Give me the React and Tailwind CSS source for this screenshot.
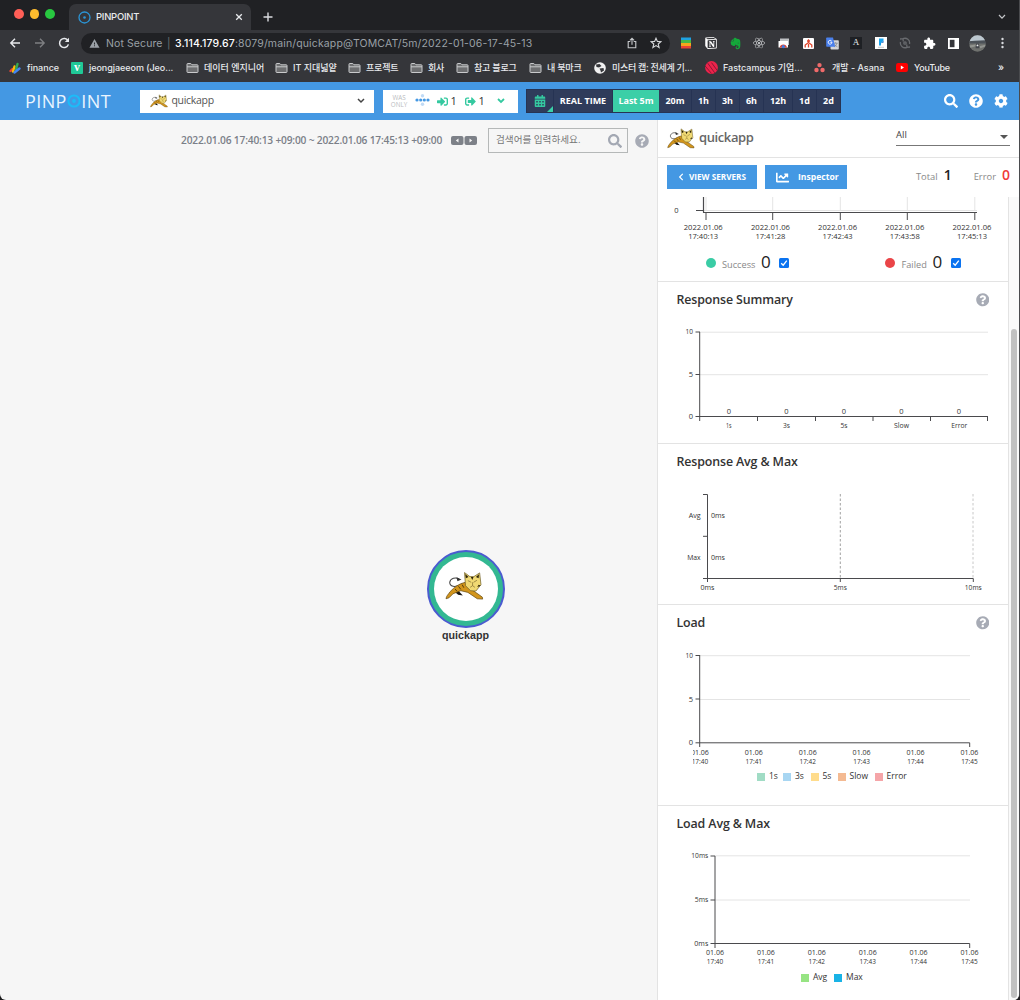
import React from "react";
import {
  FaSignInAlt, FaSignOutAlt, FaCalendarAlt, FaSearch, FaQuestionCircle, FaCog,
  FaChartLine, FaChevronLeft, FaEvernote, FaReact, FaPuzzlePiece,
} from "react-icons/fa";
import { SiNotion } from "react-icons/si";
import { MdWarning } from "react-icons/md";

const ui = "font-[Inter,'Noto_Sans_CJK_KR',sans-serif]";
const AXIS = "#4a4a4d";
const GRID = "#e4e4e4";

function Cat({ className }) {
  return (
    <svg viewBox="90 92 116 86" className={className}>
      <path d="M142 128C118 142 104 136 104 124C106 111 122 108 132 114" fill="none" stroke="#444" strokeWidth="3" />
      <path d="M124 109L139 116L127 121Z" fill="#333" />
      <path d="M116 150L130 149L143 163L129 161Z" fill="#151515" />
      <path d="M93 173C94 164 100 160 105 152C118 138 132 128 150 124L170 146L201 168L202 174L186 173L158 154L137 149L114 158L102 170Z" fill="#d2951c" stroke="#5e4510" strokeWidth="2" />
      <path d="M148 95L164 107H176L193 96L197 131L182 150L166 149L151 134Z" fill="#f0d973" stroke="#665520" strokeWidth="2" />
      <path d="M150 99L160 108L152 112ZM191 100L182 108L190 112ZM167 108H175L171 117ZM197 134L190 131L186 138Z" fill="#2b2208" />
      <path d="M158 119L168 124M185 118L175 124M165 139L172 134L179 139M172 124V134" fill="none" stroke="#7b672c" strokeWidth="2" />
      <path d="M120 144L126 151M130 136L137 145M141 131L146 140" fill="none" stroke="#3b2d0c" strokeWidth="2.5" />
    </svg>
  );
}

function Folder() {
  return (
    <svg viewBox="0 0 13 12" className="h-3 w-[13px] shrink-0">
      <path d="M1 2.2Q1 1.5 1.7 1.5H4.8L6 2.8H11.3Q12 2.8 12 3.5V9.8Q12 10.5 11.3 10.5H1.7Q1 10.5 1 9.8Z" fill="#6d6e70" stroke="#c9cacc" />
      <path d="M1 4.8H12" stroke="#c9cacc" />
    </svg>
  );
}

function Bookmark({ icon, label, className }) {
  return (
    <div className={"flex shrink-0 items-center whitespace-nowrap " + className}>
      <span className="flex w-[18px] shrink-0 items-center">{icon}</span>
      <span>{label}</span>
    </div>
  );
}

function Chrome() {
  return (
    <div className={"bg-[#35363a] text-[#e8eaed] " + ui}>
      <div className="flex h-[30px] items-end bg-[#202124]">
        <div className="flex h-full w-[69px] items-center gap-[6px] pl-[14px] pb-[2px]">
          <i className="size-[9.5px] rounded-full bg-[#ff5f57]" />
          <i className="size-[9.5px] rounded-full bg-[#febc2e]" />
          <i className="size-[9.5px] rounded-full bg-[#28c840]" />
        </div>
        <div className="flex h-[26px] w-[182px] items-center rounded-t-[7px] bg-[#35363a] pl-[9px] text-[9.5px] font-medium tracking-[-0.25px]">
          <svg viewBox="0 0 13 13" className="size-[13px]">
            <circle cx="6.5" cy="6.5" r="5.5" fill="none" stroke="#2b95d6" strokeWidth="1.3" />
            <circle cx="6.5" cy="6.5" r="1.3" fill="#2b95d6" />
          </svg>
          <span className="ml-[5px] grow">PINPOINT</span>
          <svg viewBox="0 0 8 8" className="mr-[8px] size-[8px]"><path d="M1.2 1.2L6.8 6.8M6.8 1.2L1.2 6.8" stroke="#e8eaed" strokeWidth="1.3" /></svg>
        </div>
        <svg viewBox="0 0 10 10" className="mb-[8px] ml-[12px] size-[10px]"><path d="M5 .5V9.5M.5 5H9.5" stroke="#dadce0" strokeWidth="1.4" /></svg>
        <svg viewBox="0 0 8 6" className="mb-[10px] mr-[14px] ml-auto h-[6px] w-[8px]"><path d="M1 1L4 4.2L7 1" fill="none" stroke="#c5c7ca" strokeWidth="1.2" /></svg>
      </div>

      <div className="flex h-[26px] items-center">
        <svg viewBox="0 0 12 12" className="ml-[9px] size-[12px]"><path d="M11 6H2M6 1.8L1.8 6L6 10.2" fill="none" stroke="#e8eaed" strokeWidth="1.4" /></svg>
        <svg viewBox="0 0 12 12" className="ml-[13px] size-[12px]"><path d="M1 6H10M6 1.8L10.2 6L6 10.2" fill="none" stroke="#7f8083" strokeWidth="1.3" /></svg>
        <svg viewBox="0 0 12 12" className="ml-[12px] size-[12px]"><path d="M10 3.8A4.5 4.5 0 1 0 10.4 7.4" fill="none" stroke="#e8eaed" strokeWidth="1.5" /><path d="M11 .8V5H6.8Z" fill="#e8eaed" /></svg>
        <div className="ml-[11px] flex h-[21px] w-[589px] items-center whitespace-nowrap rounded-full bg-[#202124] text-[10.5px] text-[#9aa0a6]">
          <MdWarning className="ml-[8px] size-[11px]" />
          <span className="ml-[6px] w-[61px] pt-px tracking-[0.1px]">Not Secure</span>
          <span className="w-[8px] pt-px text-[#6b6f74]">|</span>
          <span className="grow pt-px tracking-[0.14px]"><span className="font-medium text-white">3.114.179.67</span>:8079/main/quickapp@TOMCAT/5m/2022-01-06-17-45-13</span>
          <svg viewBox="0 0 10 12" className="h-[12px] w-[10px]"><path d="M3.3 4.5H1.2V10.8H8.8V4.5H6.7M5 7.8V1.4M2.9 3.4L5 1.2L7.1 3.4" fill="none" stroke="#c7c9cc" strokeWidth="1.1" /></svg>
          <svg viewBox="0 0 12 12" className="mr-[8px] ml-[13px] size-[12px]"><path d="M6 1.2L7.4 4.4L10.9 4.7L8.2 7L9.1 10.5L6 8.6L2.9 10.5L3.8 7L1.1 4.7L4.6 4.4Z" fill="none" stroke="#d5d7da" strokeWidth="1.1" /></svg>
        </div>
        <div className="ml-[3px] flex items-center">
          <span className="flex w-[25px] justify-center">
            <svg viewBox="0 0 10 12" className="h-[12px] w-[10px]"><path d="M0 .5H10V3H0Z" fill="#1fa2e0" /><path d="M0 3H10V6H0Z" fill="#46b749" /><path d="M0 6H10V9H0Z" fill="#f5a51c" /><path d="M0 9H10V11.5H0Z" fill="#ea4335" /></svg>
          </span>
          <span className="flex w-[25px] justify-center"><SiNotion className="size-[12px] text-white" /></span>
          <span className="flex w-[24px] justify-center"><FaEvernote className="size-[13px] text-[#14a83a]" /></span>
          <span className="flex w-[24px] justify-center"><FaReact className="size-[12px] text-[#d0d2d4]" /></span>
          <span className="flex w-[25px] justify-center">
            <svg viewBox="0 0 12 12" className="size-[12px]"><path d="M2 1.5H11V8H2Z" fill="#bfc1c4" /><path d="M.5 4H10V10.5H.5Z" fill="#fff" /><path d="M1.6 10.5A3.8 3.8 0 0 1 9 10.5Z" fill="#e04434" /><circle cx="5.3" cy="9.6" r="1.6" fill="#3c7de6" /></svg>
          </span>
          <span className="flex w-[24px] justify-center">
            <svg viewBox="0 0 11 11" className="size-[11px]"><rect width="11" height="11" rx="1" fill="#fff" /><path d="M5.5 1.2V4M2.2 9.5V7L5.5 4.5L8.8 7V9.5M5.5 6V9.5M4 3H7" fill="none" stroke="#e0452c" strokeWidth="1.3" /></svg>
          </span>
          <span className="flex w-[24px] justify-center">
            <svg viewBox="0 0 13 13" className="size-[13px]">
              <rect x="4.5" y="3.2" width="8.3" height="9.3" rx=".8" fill="#d4d6d9" />
              <path d="M7.5 6.2H11.7M9.6 5.2V6.2M11 6.2Q10.4 8.6 8 10M8.6 7.4Q9.6 9 11.4 9.8" fill="none" stroke="#7a8086" strokeWidth=".7" />
              <path d="M.9.5H7L9.2 9.8H.9Q.2 9.8.2 9V1.2Q.2.5.9.5Z" fill="#4a80ec" />
              <path d="M5.6 4.1A1.9 1.9 0 1 0 6 5.3H4.3" fill="none" stroke="#fff" strokeWidth=".9" />
            </svg>
          </span>
          <span className="flex w-[24px] justify-center"><span className="flex size-[12px] items-center justify-center bg-[#1e2024] font-['Liberation_Serif',serif] text-[9px]">A</span></span>
          <span className="flex w-[25px] justify-center">
            <svg viewBox="0 0 12 12" className="size-[12px]"><rect width="12" height="12" fill="#fff" /><path d="M4 1.5H8.5V3.5L6 6.3V8.5H4Z" fill="#1ba6f0" /><path d="M8.5 3.5V5.8H6L4.5 8Z" fill="#1664c4" /><path d="M3 10.3H9" stroke="#c9c9c9" /></svg>
          </span>
          <span className="flex w-[24px] justify-center">
            <svg viewBox="0 0 12 12" className="size-[12px]" fill="none" stroke="#696b6f" strokeWidth="1.3"><circle cx="6" cy="6" r="1.2" /><path d="M4 1.7A4.7 4.7 0 0 1 10.5 7M8 10.3A4.7 4.7 0 0 1 1.5 5M1 2L4 1.7L4.3 4.5M11 10L8 10.3L7.7 7.5" /></svg>
          </span>
          <span className="flex w-[24px] justify-center">
            <svg viewBox="0 0 24 24" className="size-[13px]" fill="#fff"><path d="M20.5 11H19V7c0-1.1-.9-2-2-2h-4V3.500C13 2.120 11.880 1 10.500 1S8 2.120 8 3.500V5H4c-1.100 0-2 .9-2 2v3.800h1.500c1.500 0 2.700 1.200 2.700 2.700s-1.200 2.700-2.700 2.700H2V20c0 1.100.9 2 2 2h3.800v-1.500c0-1.500 1.200-2.700 2.700-2.700s2.700 1.200 2.700 2.700V22H17c1.100 0 2-.9 2-2v-4h1.500c1.380 0 2.500-1.120 2.500-2.500S21.880 11 20.500 11z" /></svg>
          </span>
          <span className="flex w-[24px] justify-center">
            <svg viewBox="0 0 11 11" className="size-[11px]"><path d="M0 0H11V11H0Z" fill="#fff" /><path d="M1.800 1.800H6.500V9.200H1.800Z" fill="#35363a" /></svg>
          </span>
          <span className="flex w-[25px] justify-center">
            <svg viewBox="0 0 18 18" className="size-[17px]">
              <clipPath id="avatar"><circle cx="9" cy="9" r="8.7" /></clipPath>
              <g clipPath="url(#avatar)"><path d="M0 0H18V18H0Z" fill="#6f716e" /><path d="M0 0H18V6L0 7Z" fill="#bcc7cf" /><path d="M0 6.500L6 6L18 5.500V9H0Z" fill="#4c5258" /><path d="M0 11L7 10V12L0 14ZM11 12L18 10V12L12 14Z" fill="#92948f" /><path d="M7.500 9H10.500L11 14H7Z" fill="#42454a" /><circle cx="9" cy="11" r="1" fill="#eee" /></g>
            </svg>
          </span>
          <span className="flex w-[24px] justify-center">
            <svg viewBox="0 0 3 12" className="h-[12px] w-[3px]" fill="#dadce0"><circle cx="1.5" cy="2" r="1.2" /><circle cx="1.5" cy="6" r="1.2" /><circle cx="1.5" cy="10" r="1.2" /></svg>
          </span>
        </div>
      </div>

      <div className="flex h-[26px] items-center pb-[3px] pl-[9px] text-[9px] font-medium">
        <Bookmark className="w-[62px]" label="finance" icon={<svg viewBox="0 0 12 12" className="size-[12px]" fill="none" strokeWidth="2.4" strokeLinecap="round"><path d="M1.5 9L3.5 7" stroke="#ea4335" /><path d="M4 9.500L5.500 4.500" stroke="#fbbc04" /><path d="M7 7.500L8.500 2" stroke="#34a853" /><path d="M5.500 10.500L10.500 6.500" stroke="#4285f4" /></svg>} />
        <Bookmark className="w-[115px] tracking-[-0.05px]" label="jeongjaeeom (Jeo..." icon={<span className="flex size-[12px] items-center justify-center rounded-[1px] bg-[#20c997] pb-[2px] font-['Liberation_Serif',serif] text-[12px] leading-none font-bold text-white">v</span>} />
        <Bookmark className="w-[89px]" label="데이터 엔지니어" icon={<Folder />} />
        <Bookmark className="w-[73px]" label="IT 지대넓얕" icon={<Folder />} />
        <Bookmark className="w-[62px] tracking-[-0.2px]" label="프로젝트" icon={<Folder />} />
        <Bookmark className="w-[46px] tracking-[-0.2px]" label="회사" icon={<Folder />} />
        <Bookmark className="w-[73px] tracking-[-0.2px]" label="참고 블로그" icon={<Folder />} />
        <Bookmark className="w-[65px] tracking-[-0.2px]" label="내 북마크" icon={<Folder />} />
        <Bookmark className="w-[111px] tracking-[-0.3px]" label="미스터 캡: 전세계 기..." icon={<svg viewBox="0 0 12 12" className="size-[12px]"><circle cx="6" cy="6" r="5.8" fill="#f1f1f1" /><path d="M2 2.500L5.500 2L7.500 4L5 5.500L2.500 5ZM5.500 6.500L9.500 6L10 8.500L7 10.500L6.500 8.500Z" fill="#35363a" /></svg>} />
        <Bookmark className="w-[109px]" label="Fastcampus 기업..." icon={<svg viewBox="0 0 12 12" className="size-[13px]"><circle cx="6" cy="6" r="5.9" fill="#ed234b" /><path d="M2.500 2L9 11M0 4.500L6 11.500M6 1.500L11.500 9" stroke="#7c1530" strokeWidth=".8" /></svg>} />
        <Bookmark className="w-[82px]" label="개발 - Asana" icon={<svg viewBox="0 0 12 12" className="size-[11px]" fill="#f06a6a"><circle cx="6" cy="3.4" r="2.4" /><circle cx="2.7" cy="8.8" r="2.4" /><circle cx="9.3" cy="8.8" r="2.4" /></svg>} />
        <Bookmark className="w-[102px] tracking-[-0.2px]" label="YouTube" icon={<svg viewBox="0 0 12 9" className="h-[9px] w-[12px]"><rect width="12" height="9" rx="2.2" fill="#f00" /><path d="M4.800 2.500L8 4.500L4.800 6.500Z" fill="#fff" /></svg>} />
        <span className="text-[10px]">»</span>
      </div>
    </div>
  );
}

function Period({ className, children }) {
  return <div className={"flex h-full items-center justify-center border-r border-[#263353] " + className}>{children}</div>;
}

function Header() {
  return (
    <header className="flex h-[38px] items-center bg-[#4498e3] font-['Open_Sans',sans-serif]">
      <div className="ml-[25px] flex w-[114.5px] items-center text-[18px] leading-none text-[#eaf5ff]">
        <span className="tracking-[0.4px]">PINP</span>
        <svg viewBox="0 0 14 14" className="mr-[0.5px] size-[14px]"><circle cx="7" cy="7" r="5.6" fill="none" stroke="#1cbcf8" strokeWidth="2" /><circle cx="7" cy="7" r="1.9" fill="#1cbcf8" /></svg>
        <span className="tracking-[0.4px]">INT</span>
      </div>
      <div className="flex h-[23px] w-[234px] items-center bg-white pl-[10px] text-[10.5px] text-[#555]">
        <Cat className="h-[14px] w-[18px]" />
        <span className="ml-[4px] grow tracking-[-0.3px]">quickapp</span>
        <svg viewBox="0 0 8 6" className="mr-[9px] h-[6px] w-[8px]"><path d="M1 1L4 4L7 1" fill="none" stroke="#444" strokeWidth="1.5" /></svg>
      </div>
      <div className="ml-[9px] flex h-[23px] w-[135px] items-center bg-white text-[11px] text-[#333]">
        <span className="ml-[8px] w-[17px] text-center text-[6.3px] leading-[7px] text-[#b9bbc0]">WAS ONLY</span>
        <svg viewBox="0 0 15 12" className="mb-[3px] ml-[7px] h-[12px] w-[15px]"><g fill="#4498e3"><circle cx="2" cy="6" r="1.600" /><circle cx="5.700" cy="6" r="1.600" /><circle cx="9.300" cy="6" r="1.600" /><circle cx="13" cy="6" r="1.600" /></g><g fill="#bfdaf6"><circle cx="7.500" cy="1.800" r="1.700" /><circle cx="7.500" cy="10.200" r="1.700" /></g></svg>
        <FaSignInAlt className="ml-[7px] size-[11px] text-[#34c9a0]" />
        <span className="ml-[3px] w-[12px]">1</span>
        <FaSignOutAlt className="ml-[2px] size-[11px] text-[#34c9a0]" />
        <span className="ml-[3px] w-[12px]">1</span>
        <svg viewBox="0 0 8 6" className="ml-[6px] h-[6px] w-[8px]"><path d="M1 1L4 4L7 1" fill="none" stroke="#34c9a0" strokeWidth="1.800" /></svg>
      </div>
      <div className="ml-[8.5px] flex h-[24px] w-[315px] items-center border-y border-[#263353] bg-[#2f3c5b] text-[9px] font-bold whitespace-nowrap text-white">
        <div className="relative flex h-full w-[28px] shrink-0 items-center justify-center border-x border-[#263353]">
          <FaCalendarAlt className="size-[12px] text-[#34c9a0]" />
          <svg viewBox="0 0 6 6" className="absolute right-0 bottom-0 size-[6px]"><path d="M6 0V6H0Z" fill="#3bd0a8" /></svg>
        </div>
        <Period className="w-[59px]">REAL TIME</Period>
        <div className="flex h-full w-[46px] items-center justify-center bg-[#3bcfa7]">Last 5m</div>
        <Period className="w-[33px]">20m</Period>
        <Period className="w-[24px]">1h</Period>
        <Period className="w-[24px]">3h</Period>
        <Period className="w-[24px]">6h</Period>
        <Period className="w-[29px]">12h</Period>
        <Period className="w-[24px]">1d</Period>
        <Period className="w-[24px]">2d</Period>
      </div>
      <div className="mr-[12px] ml-auto flex items-center gap-[11px] text-white">
        <FaSearch className="size-[14px]" />
        <FaQuestionCircle className="size-[14px]" />
        <FaCog className="size-[14px]" />
      </div>
    </header>
  );
}

function ServerMap() {
  return (
    <main className="flex w-[657px] flex-col bg-[#f6f6f6]">
      <div className="flex h-[41px] items-center justify-end pr-[8px] font-['Open_Sans','Noto_Sans_CJK_KR',sans-serif] text-[#7b7f88]">
        <span className="w-[262px] whitespace-nowrap text-[10.2px] font-semibold tracking-[-0.18px]">2022.01.06 17:40:13 +09:00 ~ 2022.01.06 17:45:13 +09:00</span>
        <svg viewBox="0 0 26 9" className="ml-[8px] h-[9px] w-[26px]"><rect width="12.5" height="9" rx="2" fill="#7d8188" /><rect x="13.5" width="12.5" height="9" rx="2" fill="#7d8188" /><path d="M7.500 2.500V6.500L4.800 4.500ZM18.500 2.500V6.500L21.200 4.500Z" fill="#f6f6f6" /></svg>
        <div className="ml-[11px] flex h-[25px] w-[140px] items-center border border-[#b5b8b8] pl-[7px] text-[9.6px] text-[#777]">
          <span className="grow">검색어를 입력하세요.</span>
          <FaSearch className="mr-[5px] size-[14px] text-[#a3a8b3]" />
        </div>
        <FaQuestionCircle className="ml-[7px] size-[14px] text-[#a7abb5]" />
      </div>
      <div className="mt-[389px] ml-[426px] flex w-[79px] flex-col items-center">
        <div className="flex size-[78px] items-center justify-center rounded-full border-2 border-[#4b5bd0] bg-[#33b892]">
          <div className="flex size-[64px] items-center justify-center rounded-full bg-white">
            <Cat className="mt-[-6px] mr-[3px] h-[30px] w-[39px]" />
          </div>
        </div>
        <span className="font-['Liberation_Sans',sans-serif] text-[10.7px] leading-[14px] font-bold text-[#333]">quickapp</span>
      </div>
    </main>
  );
}

function T({ x, y, w, size = 7.5, anchor = "middle", fill = "#333", children }) {
  return (
    <text x={x} y={y} textAnchor={anchor} fontSize={size} fill={fill} textLength={w} lengthAdjust="spacingAndGlyphs">{children}</text>
  );
}

function Section({ title, help, className, children }) {
  return (
    <section className={"flex shrink-0 flex-col border-t border-[#e3e3e3] " + className}>
      <div className="flex h-[36px] shrink-0 items-center justify-between pr-[19px] pl-[18.5px]">
        <h2 className="text-[12.4px] font-semibold tracking-[-0.12px] text-[#333]">{title}</h2>
        {help && <FaQuestionCircle className="size-[13.5px] text-[#a7abb5]" />}
      </div>
      {children}
    </section>
  );
}

const chart = "w-[350px] shrink-0 font-['Open_Sans',sans-serif]";

function Scatter() {
  const xs = [706, 772.7, 840.3, 907.3, 974.8];
  const times = ["17:40:13", "17:41:28", "17:42:43", "17:43:58", "17:45:13"];
  return (
    <svg viewBox="658 197 350 50" className={chart + " h-[50px]"}>
      {xs.map((x, i) => (
        <g key={x}>
          <path d={`M${x} 197V211`} stroke={GRID} />
          <path d={`M${x} 213V220`} stroke={AXIS} />
          <T x={703.2 + i * 67.2} y={230} w={39}>2022.01.06</T>
          <T x={703.2 + i * 67.2} y={239.3} w={30}>{times[i]}</T>
        </g>
      ))}
      <path d="M704 210.5H977" stroke={GRID} />
      <path d="M703.5 197V212.5M696 210.5H703.5M703 212.5H977" stroke={AXIS} fill="none" strokeWidth="1.2" />
      <T x={676.5} y={212.7}>0</T>
    </svg>
  );
}

function ResponseSummary() {
  return (
    <svg viewBox="658 318 350 124" className={chart + " h-[124px]"}>
      <path d="M700 332.200H988M700 374.700H988" stroke={GRID} />
      <path d="M695.500 332H700M695.500 374.500H700M695.500 416.500H988M699.700 332V421" stroke={AXIS} fill="none" />
      {[757.5, 815.5, 873, 930.5, 987.5].map((x) => <path key={x} d={`M${x} 416V421`} stroke={AXIS} />)}
      <T x={693} y={334.3} w={7.5} anchor="end">10</T>
      <T x={693} y={377} anchor="end">5</T>
      <T x={693} y={418.5} anchor="end">0</T>
      {["1s", "3s", "5s", "Slow", "Error"].map((l, i) => (
        <g key={l}>
          <T x={728.8 + i * 57.5} y={414}>0</T>
          <T x={728.8 + i * 57.6} y={428.3} w={[5.5, 7, 7, 15, 16][i]} size={7.3}>{l}</T>
        </g>
      ))}
    </svg>
  );
}

function ResponseAvgMax() {
  return (
    <svg viewBox="658 480 350 124" className={chart + " h-[124px]"}>
      <path d="M840.300 494V578" stroke="#a0a0a0" strokeDasharray="2.5 2" />
      <path d="M973 494V578" stroke="#c8c8c8" strokeDasharray="2.5 2" />
      <path d="M703 494.500H707.500V582M703 536.300H707.500M703 578.500H973.300V582M840.300 578V582" stroke={AXIS} fill="none" />
      <T x={700.7} y={518} w={12} anchor="end">Avg</T>
      <T x={700.7} y={559.6} w={13.5} anchor="end">Max</T>
      <T x={711} y={518} w={14} anchor="start">0ms</T>
      <T x={711} y={559.6} w={14} anchor="start">0ms</T>
      <T x={707.5} y={590} w={14}>0ms</T>
      <T x={840.3} y={590} w={13}>5ms</T>
      <T x={973.3} y={590} w={17}>10ms</T>
    </svg>
  );
}

function Load() {
  return (
    <svg viewBox="658 641 350 125" className={chart + " h-[125px]"}>
      <path d="M700 655.700H970M700 699.500H970" stroke={GRID} />
      <path d="M695.500 655.500H700M695.500 699H700M695.500 742.800H969.700V747M699.700 655V747" stroke={AXIS} fill="none" />
      <T x={693} y={658.2} w={7.5} anchor="end">10</T>
      <T x={693} y={702} anchor="end">5</T>
      <T x={693} y={745} anchor="end">0</T>
      {[40, 41, 42, 43, 44, 45].map((m, i) => (
        <g key={m}>
          <T x={699.9 + i * 53.9} y={755} w={18}>01.06</T>
          <T x={699.9 + i * 53.9} y={764} w={16.5}>{"17:" + m}</T>
        </g>
      ))}
      <path d="M688 748H693V765H688Z" fill="#fff" />
    </svg>
  );
}

function LoadAvgMax() {
  return (
    <svg viewBox="658 842 350 125" className={chart + " h-[125px]"}>
      <path d="M715 855.800H970M715 900H970" stroke={GRID} />
      <path d="M710.500 856H715M710.500 900H715M710.500 943.500H969.700V948M715 856V948" stroke={AXIS} fill="none" />
      <T x={708.3} y={858.2} w={17} anchor="end">10ms</T>
      <T x={708.3} y={902} w={13.5} anchor="end">5ms</T>
      <T x={708.3} y={945.5} w={14} anchor="end">0ms</T>
      {[40, 41, 42, 43, 44, 45].map((m, i) => (
        <g key={m}>
          <T x={715 + i * 50.9} y={955.3} w={18}>01.06</T>
          <T x={715 + i * 50.9} y={964.3} w={16.5}>{"17:" + m}</T>
        </g>
      ))}
    </svg>
  );
}

function Legend({ color, className, label }) {
  return (
    <div className={"flex items-center whitespace-nowrap " + className}>
      <i className={"mr-[4px] size-[8px] shrink-0 " + color} />{label}
    </div>
  );
}

function Check() {
  return (
    <span className="flex size-[10px] items-center justify-center rounded-[1.5px] bg-[#0b73f0]">
      <svg viewBox="0 0 8 8" className="size-[8px]"><path d="M1.200 4.200L3.200 6.200L6.800 1.600" fill="none" stroke="#fff" strokeWidth="1.3" /></svg>
    </span>
  );
}

function Panel() {
  return (
    <aside className="flex w-[363px] flex-col border-l border-[#e3e3e3] bg-white font-['Open_Sans',sans-serif]">
      <div className="flex h-[38px] shrink-0 items-center border-b border-[#e3e3e3]">
        <Cat className="ml-[9px] h-[21px] w-[28px]" />
        <span className="ml-[4px] grow pb-px text-[13px] font-semibold tracking-[-0.4px] text-[#666]">quickapp</span>
        <div className="mr-[10px] mb-[5px] flex h-[20px] w-[114px] items-center justify-between border-b border-[#777] text-[9.5px] text-[#444]">
          <span className="pb-px">All</span>
          <svg viewBox="0 0 8 4" className="mt-[3px] mr-[2px] h-[4px] w-[8px]"><path d="M0 0H8L4 4Z" fill="#555" /></svg>
        </div>
      </div>
      <div className="flex h-[39px] shrink-0 items-center pb-px pl-[9px]">
        <div className="flex h-[24px] w-[90px] items-center bg-[#4498e3] text-[8.2px] font-bold whitespace-nowrap text-white">
          <FaChevronLeft className="ml-[10px] size-[8px]" /><span className="ml-[4px]">VIEW SERVERS</span>
        </div>
        <div className="ml-[8px] flex h-[24px] w-[82px] items-center bg-[#4498e3] text-[8.6px] font-bold text-white">
          <FaChartLine className="ml-[11px] size-[13px]" /><span className="ml-[9px]">Inspector</span>
        </div>
        <div className="ml-auto flex items-baseline pb-[2px] pr-[9px] text-[9.4px] text-[#888]">
          <span>Total</span><span className="ml-[6px] w-[8px] text-[14px] leading-none font-semibold text-[#222]">1</span>
          <span className="ml-[22px]">Error</span><span className="ml-[6px] w-[9px] text-[14px] leading-none font-semibold text-[#f03a3a]">0</span>
        </div>
      </div>
      <div className="flex h-[803px] overflow-hidden">
        <div className="flex w-[351px] shrink-0 flex-col border-r border-[#e3e3e3]">
          <div className="flex h-[84px] shrink-0 flex-col">
            <Scatter />
            <div className="flex h-[32px] items-center text-[9.2px] text-[#888]">
              <i className="ml-[47.5px] size-[10px] rounded-full bg-[#3acca5]" />
              <span className="ml-[6.5px] w-[34px] pt-[3px]">Success</span>
              <span className="ml-[5px] w-[10px] pb-[3px] text-[17px] leading-none text-[#222]">0</span>
              <span className="ml-[8px]"><Check /></span>
              <i className="ml-[96px] size-[10px] rounded-full bg-[#ea4548]" />
              <span className="ml-[6.5px] w-[27px] pt-[3px]">Failed</span>
              <span className="ml-[4px] w-[10px] pb-[3px] text-[17px] leading-none text-[#222]">0</span>
              <span className="ml-[8px]"><Check /></span>
            </div>
          </div>
          <Section title="Response Summary" help className="h-[162px]"><ResponseSummary /></Section>
          <Section title="Response Avg & Max" className="h-[161px]"><ResponseAvgMax /></Section>
          <Section title="Load" help className="h-[201px]">
            <Load />
            <div className="flex h-[21px] items-center pl-[99px] text-[8.5px] text-[#333]">
              <Legend color="bg-[#a1dcc5]" className="w-[26px]" label="1s" />
              <Legend color="bg-[#a8d6f2]" className="w-[27.5px]" label="3s" />
              <Legend color="bg-[#ffdc8c]" className="w-[27px]" label="5s" />
              <Legend color="bg-[#f4ba92]" className="w-[37px]" label="Slow" />
              <Legend color="bg-[#f5a5a8]" className="w-[40px]" label="Error" />
            </div>
          </Section>
          <Section title="Load Avg & Max" className="h-[200px]">
            <LoadAvgMax />
            <div className="flex h-[21px] items-center pl-[143px] text-[8.5px] text-[#333]">
              <Legend color="bg-[#97e483]" className="w-[33px]" label="Avg" />
              <Legend color="bg-[#19b3e6]" className="w-[33px]" label="Max" />
            </div>
          </Section>
        </div>
        <div className="flex w-[11px] flex-col bg-[#fafafa] pl-[2px]">
          <div className="mt-[132px] h-[669px] w-[6px] rounded-full bg-[#c1c1c1]" />
        </div>
      </div>
    </aside>
  );
}

export default function App() {
  return (
    <div className="h-[1000px] w-[1020px] overflow-hidden bg-[#1b1b1d]">
      <div className="h-[1000px] w-[1020px] overflow-hidden rounded-b-[6px] border-r border-[#4a4b4e]">
        <div className="w-[1020px]">
          <Chrome />
          <Header />
          <div className="flex h-[880px]">
            <ServerMap />
            <Panel />
          </div>
        </div>
      </div>
    </div>
  );
}
